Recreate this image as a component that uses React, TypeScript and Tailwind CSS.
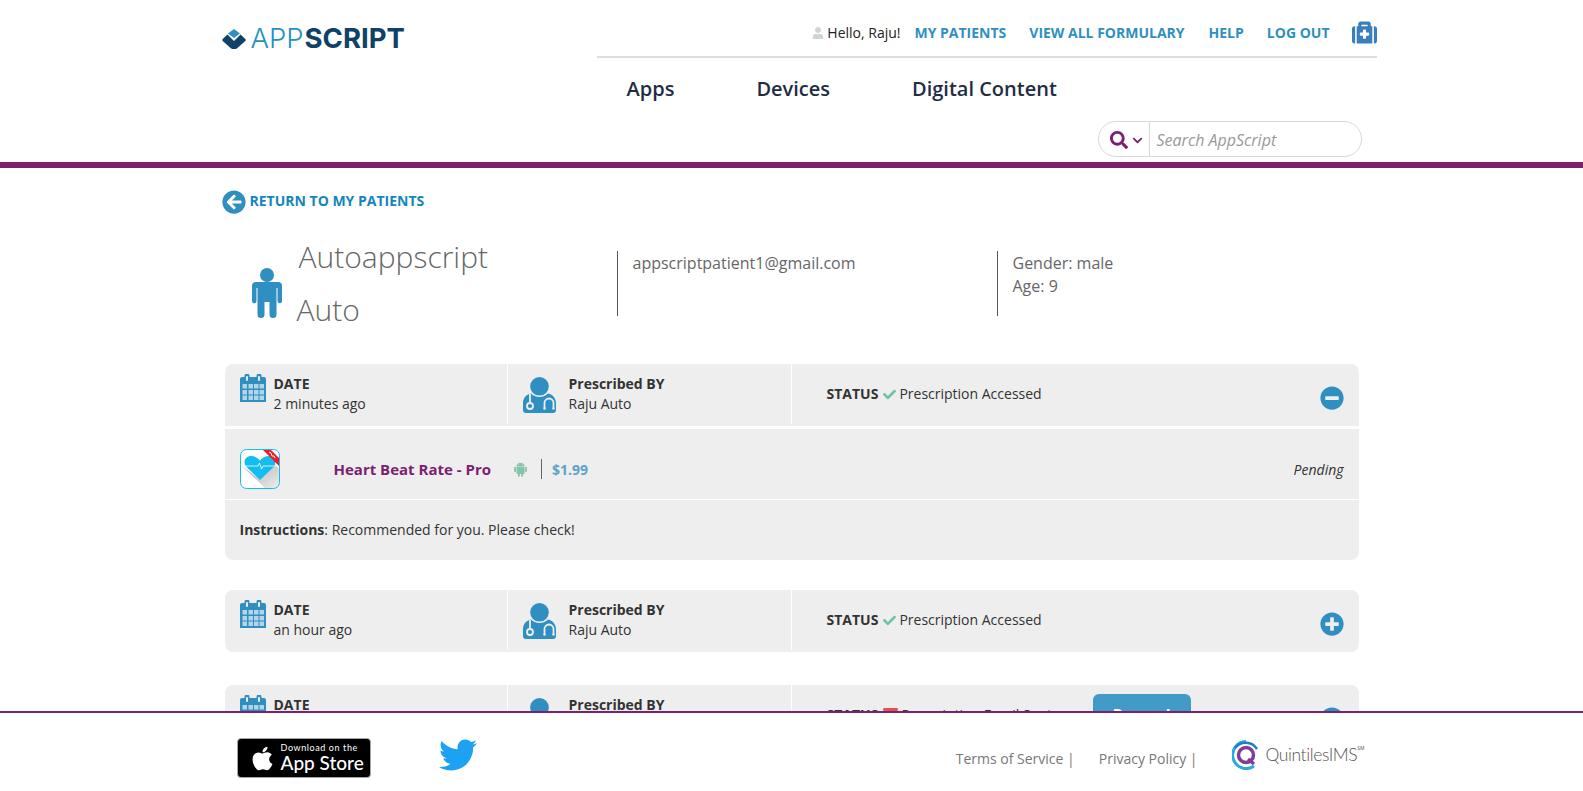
import React from "react";
import { FaUser, FaMedkit, FaSearch, FaChevronDown, FaArrowCircleLeft, FaCheck, FaMinusCircle, FaPlusCircle, FaApple, FaTwitter, FaEnvelope } from "react-icons/fa";
import { AiFillAndroid } from "react-icons/ai";

const Calendar = () => (
  <svg width="26" height="28" viewBox="0 0 26 28" className="shrink-0 mt-[10px] ml-[15px]">
    <path d="M2 3h2.500V2a2.500 2.500 0 0 1 5 0v1h7V2a2.500 2.500 0 0 1 5 0v1H24a2 2 0 0 1 2 2v23H0V5a2 2 0 0 1 2-2z" fill="#2f8fc1" />
    <rect x="6" y="2" width="2" height="5" rx="1" fill="#eee" />
    <rect x="18" y="2" width="2" height="5" rx="1" fill="#eee" />
    {[10, 16, 21.500].map((y) =>
      [2.500, 8.500, 14, 19.500].map((x) => <rect key={`${x}-${y}`} x={x} y={y} width="4.500" height="4.500" fill="#b4d5e7" />)
    )}
  </svg>
);

const Doctor = () => (
  <svg width="33" height="36" viewBox="0 0 33 36" className="shrink-0 mt-[13px] ml-[15px]">
    <path d="M8 16.500c2 2 5 3.500 8.500 3.500s6.500-1.500 8.500-3.500c5 1 8 5 8 10V33a3 3 0 0 1-3 3H3a3 3 0 0 1-3-3v-6.500c0-5.500 3-9 8-10z" fill="#2f8fc1" />
    <circle cx="16.500" cy="9.300" r="9.300" fill="#2f8fc1" />
    <path d="M7 17v8M21.500 31v-5a4.500 4.500 0 0 1 9 0v5" stroke="#eee" strokeWidth="1.800" fill="none" />
    <circle cx="7" cy="29" r="3" fill="none" stroke="#eee" strokeWidth="1.800" />
    <circle cx="21.500" cy="31.500" r="1.200" fill="#eee" />
    <circle cx="30.500" cy="31.500" r="1.200" fill="#eee" />
  </svg>
);

const Person = () => (
  <svg width="30" height="50" viewBox="0 0 30 50" className="shrink-0 mt-[36px] ml-[30px]">
    <circle cx="15" cy="7" r="7" fill="#2f8fc1" />
    <path d="M4 14h22a4 4 0 0 1 4 4v15a2 2 0 0 1-4.500 0V20h-1v26.500a3.500 3.500 0 0 1-7 0V34h-5v12.500a3.500 3.500 0 0 1-7 0V20h-1v13A2 2 0 0 1 0 33V18a4 4 0 0 1 4-4z" fill="#2f8fc1" />
  </svg>
);

const AppIcon = () => (
  <svg width="40" height="40" viewBox="0 0 40 40" className="shrink-0 ml-[15px]">
    <defs>
      <clipPath id="box"><rect x="0.500" y="0.500" width="39" height="39" rx="6" /></clipPath>
      <linearGradient id="shade" x1="0" y1="0" x2="1" y2="1">
        <stop offset="0" stopColor="#a8a8a8" />
        <stop offset="1" stopColor="#efefef" />
      </linearGradient>
    </defs>
    <rect x="0.500" y="0.500" width="39" height="39" rx="6" fill="#fff" />
    <g clipPath="url(#box)">
      <path d="M2 17 20 30.500 33 12 40 22V40H26z" fill="url(#shade)" />
      <path d="M20 31 6.500 18C2 12 6 7 11 7c4 0 7 2 9 4.500C22 9 25 7 29 7c5 0 9 5 4.500 11z" fill="#12bdf0" />
      <path d="M2 17h16l1.500-3 2 6 1.500-3h13" stroke="#fff" strokeWidth="0.800" fill="none" />
      <path d="M22 0h8L40 10v8z" fill="#ee1c2e" />
      <path d="M29 3l2 1 1 3 2 0 1 2" stroke="#fff" strokeWidth="1" fill="none" />
    </g>
    <rect x="0.500" y="0.500" width="39" height="39" rx="6" fill="none" stroke="#12bdf0" />
  </svg>
);

const Logo = () => (
  <div className="flex items-center">
    <svg width="24" height="20" viewBox="0 0 24 20" className="mr-[5px]">
      <path d="M12 0l6 4.500-6 4.500-6-4.500z" fill="#2f8fc1" />
      <path d="M.700 10 5.500 5.500 12 12l6.500-6.500L23.300 10a1.500 1.500 0 0 1 0 2l-7.300 6.500a5.500 5.500 0 0 1-8 0L.700 12a1.500 1.500 0 0 1 0-2z" fill="#0f4268" />
    </svg>
    <span className="text-[27.500px] leading-none font-[300] text-[#2492c4] [font-family:Inter,sans-serif]">APP</span>
    <span className="ml-[1px] text-[27.500px] leading-none font-[700] text-[#0f4268] [font-family:Inter,sans-serif]">SCRIPT</span>
  </div>
);

type RowProps = { date: string; status: React.ReactNode; statusText: string; open?: boolean; extra?: React.ReactNode; rounded?: string };

const CardHead = ({ date, status, statusText, open, extra, rounded }: RowProps) => (
  <div className={`flex h-[62px] items-start bg-[#eeeeee] relative ${rounded}`}>
    <div className="flex w-[282px]">
      <Calendar />
      <div className="ml-[8px] mt-[10px] leading-[20px]">
        <div className="font-bold">DATE</div>
        <div>{date}</div>
      </div>
    </div>
    <div className="w-[1px] h-[60px] bg-white" />
    <div className="flex w-[283px]">
      <Doctor />
      <div className="ml-[13px] mt-[10px] leading-[20px]">
        <div className="font-bold">Prescribed BY</div>
        <div>Raju Auto</div>
      </div>
    </div>
    <div className="w-[1px] h-[60px] bg-white" />
    <div className="flex flex-1 items-start pl-[35px] pt-[20px] pr-[15px] leading-[20px]">
      <span className="font-bold">STATUS</span>
      <span className="ml-[5px] mr-[3px] mt-[4px]">{status}</span>
      <span>{statusText}</span>
      {extra}
      <span className="ml-auto mt-[2px] text-[24px] text-[#2f8fc1]">{open ? <FaMinusCircle /> : <FaPlusCircle />}</span>
    </div>
  </div>
);

export default function App() {
  return (
    <div className="h-screen flex flex-col overflow-hidden bg-white text-[14px] text-[#333] [font-family:'Open_Sans',sans-serif]">
      <header className="shrink-0 border-b-[6px] border-[#7b1f6f] h-[168px]">
        <div className="w-[1170px] mx-auto flex">
          <div className="w-[390px] pl-[15px] pt-[25px]">
            <Logo />
          </div>
          <div className="w-[780px]">
            <div className="h-[58px] pt-[9px] flex items-center justify-end border-b-2 border-[#dddddd] font-bold text-[#2f8fc1]">
              <FaUser className="text-[#cfd4d4] text-[12px] mr-[3px]" />
              <span className="font-normal text-[#222] mr-[14px]">Hello, Raju!</span>
              <span>MY PATIENTS</span>
              <span className="ml-[23px]">VIEW ALL FORMULARY</span>
              <span className="ml-[24px]">HELP</span>
              <span className="ml-[23px]">LOG OUT</span>
              <FaMedkit className="ml-[22px] text-[25px] text-[#3a7fbd]" />
            </div>
            <nav className="h-[63px] flex items-center gap-[82px] pl-[30px] pb-[2px] text-[20px] font-semibold text-[#1f2d44]">
              <span>Apps</span>
              <span>Devices</span>
              <span>Digital Content</span>
            </nav>
            <div className="flex justify-end pr-[15px]">
              <div className="w-[264px] h-[36px] flex items-center rounded-[18px] border border-[#d8d8d8]">
                <div className="w-[51px] h-full flex items-center pl-[11px] pt-[2px] border-r border-[#d8d8d8] text-[#7b1f6f]">
                  <FaSearch className="text-[18px]" />
                  <FaChevronDown className="text-[11px] ml-[4px]" />
                </div>
                <span className="pl-[7px] pt-[1px] text-[16px] italic text-[#999]">Search AppScript</span>
              </div>
            </div>
          </div>
        </div>
      </header>

      <main className="flex-1 min-h-0 overflow-hidden">
        <div className="w-[1170px] mx-auto pl-[15px]">
          <div className="mt-[22px] h-[24px] flex items-center font-bold text-[#1386bd]">
            <FaArrowCircleLeft className="text-[24px] text-[#2f8fc1] mr-[4px]" />
            <span className="-mt-[3px]">RETURN TO MY PATIENTS</span>
          </div>

          <div className="mt-[18px] h-[106px] flex text-[#666]">
            <div className="w-[395px] flex">
              <Person />
              <div className="-mt-[2px] text-[30px] font-light leading-[53px] text-[#666] ml-[15px]">
                <div className="ml-[2px]">Autoappscript</div>
                <div>Auto</div>
              </div>
            </div>
            <div className="w-[380px] mt-[19px] h-[65px] border-l border-[#555] pl-[15px] pt-[1px] text-[16px] leading-[23px]">
              appscriptpatient1@gmail.com
            </div>
            <div className="mt-[19px] h-[65px] border-l border-[#555] pl-[15px] pt-[1px] text-[16px] leading-[23px]">
              <div>Gender: male</div>
              <div>Age: 9</div>
            </div>
          </div>

          <div className="ml-[3px] w-[1134px] mt-[26px]">
            <CardHead date="2 minutes ago" open status={<FaCheck className="text-[#6cc3a6] text-[13px]" />} statusText="Prescription Accessed" rounded="rounded-t-lg" />
            <div className="mt-[3px] h-[71px] pt-[10px] bg-[#eeeeee] flex items-center border-b border-white">
              <AppIcon />
              <span className="ml-[54px] font-bold text-[15px] text-[#7b1f6f]">Heart Beat Rate - Pro</span>
              <AiFillAndroid className="ml-[21px] text-[17px] text-[#86c4aa]" />
              <span className="ml-[12px] h-[20px] border-l border-[#666]" />
              <span className="ml-[10px] font-bold text-[#5ba3c9]">$1.99</span>
              <span className="ml-auto mr-[15px] italic">Pending</span>
            </div>
            <div className="h-[60px] bg-[#eeeeee] rounded-b-lg pl-[15px] pt-[20px] leading-[20px]">
              <span className="font-bold">Instructions</span>: Recommended for you. Please check!
            </div>

            <div className="mt-[30px]">
              <CardHead date="an hour ago" status={<FaCheck className="text-[#6cc3a6] text-[13px]" />} statusText="Prescription Accessed" rounded="rounded-lg" />
            </div>

            <div className="mt-[33px]">
              <CardHead
                date="a day ago"
                status={<FaEnvelope className="text-[#e0524f] text-[15px] -mt-[3px]" />}
                statusText="Prescription Email Sent"
                rounded="rounded-lg"
                extra={<span className="absolute left-[868px] top-[9px] w-[98px] h-[42px] rounded-md bg-[#429bc6] text-white font-bold text-[16px] flex items-center justify-center">Resend</span>}
              />
            </div>
          </div>
        </div>
      </main>

      <footer className="shrink-0 h-[80px] border-t-2 border-[#7b1f6f] bg-white">
        <div className="w-[1170px] mx-auto flex items-start pl-[30px] pt-[25px]">
          <div className="w-[134px] h-[40px] rounded-[4px] border border-[#a6a6a6] bg-black text-white flex items-center pl-[11px]">
            <FaApple className="text-[27px] mr-[5px]" />
            <div className="[font-family:Lato,sans-serif]">
              <div className="text-[9px] leading-[10px] tracking-[0.6px]">Download on the</div>
              <div className="text-[19px] leading-[20px] font-medium">App Store</div>
            </div>
          </div>
          <FaTwitter className="ml-[68px] -mt-[2px] text-[38px] text-[#1da1f2]" />
          <div className="ml-auto flex items-center text-[#777]">
            <div className="mt-[8px] flex text-[14px]">
              <span>Terms of Service |</span>
              <span className="ml-[24px]">Privacy Policy |</span>
            </div>
            <div className="ml-[34px] mr-[12px] mt-[2px] flex items-center">
              <svg width="28" height="30" viewBox="0 0 28 30">
                <path d="M14 1.500a13.500 13.500 0 1 0 8 24.500" fill="none" stroke="#29abe2" strokeWidth="3" />
                <path d="M3 8a13.500 13.500 0 0 1 22 1" fill="none" stroke="#1e7fc2" strokeWidth="2.500" />
                <circle cx="14" cy="15" r="7.500" fill="none" stroke="#7f3f98" strokeWidth="3.500" />
                <path d="M16 19l6 5" stroke="#7f3f98" strokeWidth="3.500" />
              </svg>
              <span className="ml-[6px] text-[17.500px] tracking-[-0.4px] text-[#555] font-light [font-family:Lato,sans-serif]">QuintilesIMS</span>
              <span className="text-[5px] self-start mt-[5px] text-[#555]">SM</span>
            </div>
          </div>
        </div>
      </footer>
    </div>
  );
}
